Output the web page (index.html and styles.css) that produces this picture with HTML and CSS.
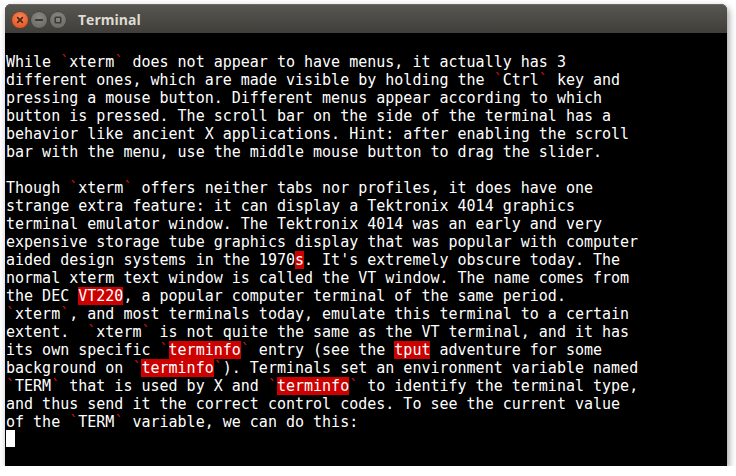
FILE: index.html
```html
<!DOCTYPE html>
<html>
<head>
<meta charset="utf-8">
<link rel="stylesheet" href="styles.css">
</head>
<body>
<div class="window">
  <div class="titlebar">
    <div class="buttons">
      <span class="btn close"><svg width="16" height="16" viewBox="0 0 16 16"><path d="M5.6 5.6 L10.4 10.4 M10.4 5.6 L5.6 10.4" stroke="#4a2515" stroke-width="1.6" stroke-linecap="round"/></svg></span>
      <span class="btn"><svg width="16" height="16" viewBox="0 0 16 16"><path d="M4.8 8 H11.2" stroke="#3a3935" stroke-width="1.8" stroke-linecap="round"/></svg></span>
      <span class="btn"><svg width="16" height="16" viewBox="0 0 16 16"><rect x="5.2" y="5.2" width="5.6" height="5.6" rx="0.8" fill="none" stroke="#3a3935" stroke-width="1.5"/></svg></span>
    </div>
    <div class="title">Terminal</div>
  </div>
  <div class="screen">
<div class="row"> </div>
<div class="row">While <b>`</b>xterm<b>`</b> does not appear to have menus, it actually has 3</div>
<div class="row">different ones, which are made visible by holding the <b>`</b>Ctrl<b>`</b> key and</div>
<div class="row">pressing a mouse button. Different menus appear according to which</div>
<div class="row">button is pressed. The scroll bar on the side of the terminal has a</div>
<div class="row">behavior like ancient X applications. Hint: after enabling the scroll</div>
<div class="row">bar with the menu, use the middle mouse button to drag the slider.</div>
<div class="row"> </div>
<div class="row">Though <b>`</b>xterm<b>`</b> offers neither tabs nor profiles, it does have one</div>
<div class="row">strange extra feature: it can display a Tektronix 4014 graphics</div>
<div class="row">terminal emulator window. The Tektronix 4014 was an early and very</div>
<div class="row">expensive storage tube graphics display that was popular with computer</div>
<div class="row">aided design systems in the 1970<i>s</i>. It's extremely obscure today. The</div>
<div class="row">normal xterm text window is called the VT window. The name comes from</div>
<div class="row">the DEC <i>VT220</i>, a popular computer terminal of the same period.</div>
<div class="row"><b>`</b>xterm<b>`</b>, and most terminals today, emulate this terminal to a certain</div>
<div class="row">extent.  <b>`</b>xterm<b>`</b> is not quite the same as the VT terminal, and it has</div>
<div class="row">its own specific <b>`</b><i>terminfo</i><b>`</b> entry (see the <i>tput</i> adventure for some</div>
<div class="row">background on <b>`</b><i>terminfo</i><b>`</b>). Terminals set an environment variable named</div>
<div class="row"><b>`</b>TERM<b>`</b> that is used by X and <b>`</b><i>terminfo</i><b>`</b> to identify the terminal type,</div>
<div class="row">and thus send it the correct control codes. To see the current value</div>
<div class="row">of the <b>`</b>TERM<b>`</b> variable, we can do this:</div>
<div class="row"><span class="cursor"> </span></div>
  </div>
</div>
</body>
</html>
```
FILE: styles.css
```css
html, body {
  margin: 0;
  padding: 0;
  background: #ffffff;
}
body {
  padding: 4px 0 0 5px;
}
.window {
  width: 722px;
  border-radius: 6px 6px 0 0;
  box-shadow: 2px 3px 7px rgba(0, 0, 0, 0.38);
  background: #000;
}
.titlebar {
  height: 29px;
  border-radius: 6px 6px 0 0;
  background: linear-gradient(#595751, #3f3e3a);
  box-shadow: inset 0 1px 0 rgba(255, 255, 255, 0.12);
  display: flex;
  align-items: center;
  padding-left: 7px;
  box-sizing: border-box;
}
.buttons {
  display: flex;
  gap: 3px;
  margin-top: 2px;
}
.btn {
  width: 16px;
  height: 16px;
  border-radius: 50%;
  background: radial-gradient(circle at 50% 35%, #8a8983, #64635e);
  box-shadow: 0 0 0 0.5px #35342f;
  display: flex;
}
.btn.close {
  background: radial-gradient(circle at 50% 35%, #f6875a, #dd4a17);
  box-shadow: 0 0 0 0.5px #8c3410;
}
.title {
  margin-left: 12px;
  margin-top: 2px;
  font-family: "Open Sans", "Liberation Sans", sans-serif;
  font-weight: bold;
  font-size: 14px;
  color: #dfdbd2;
}
.screen {
  height: 433px;
  box-sizing: border-box;
  padding: 2px 1px 0 1px;
  font-family: "DejaVu Sans Mono", monospace;
  font-size: 15px;
  line-height: 18px;
  color: #ffffff;
}
.row {
  height: 18px;
  white-space: pre;
}
.row b {
  font-weight: normal;
  color: #d81010;
}
.row i {
  font-style: normal;
  background: #cd0000;
  color: #ffffff;
}
.cursor {
  display: inline-block;
  width: 9px;
  height: 17px;
  margin-top: -1px;
  vertical-align: top;
  background: #ffffff;
}
```
